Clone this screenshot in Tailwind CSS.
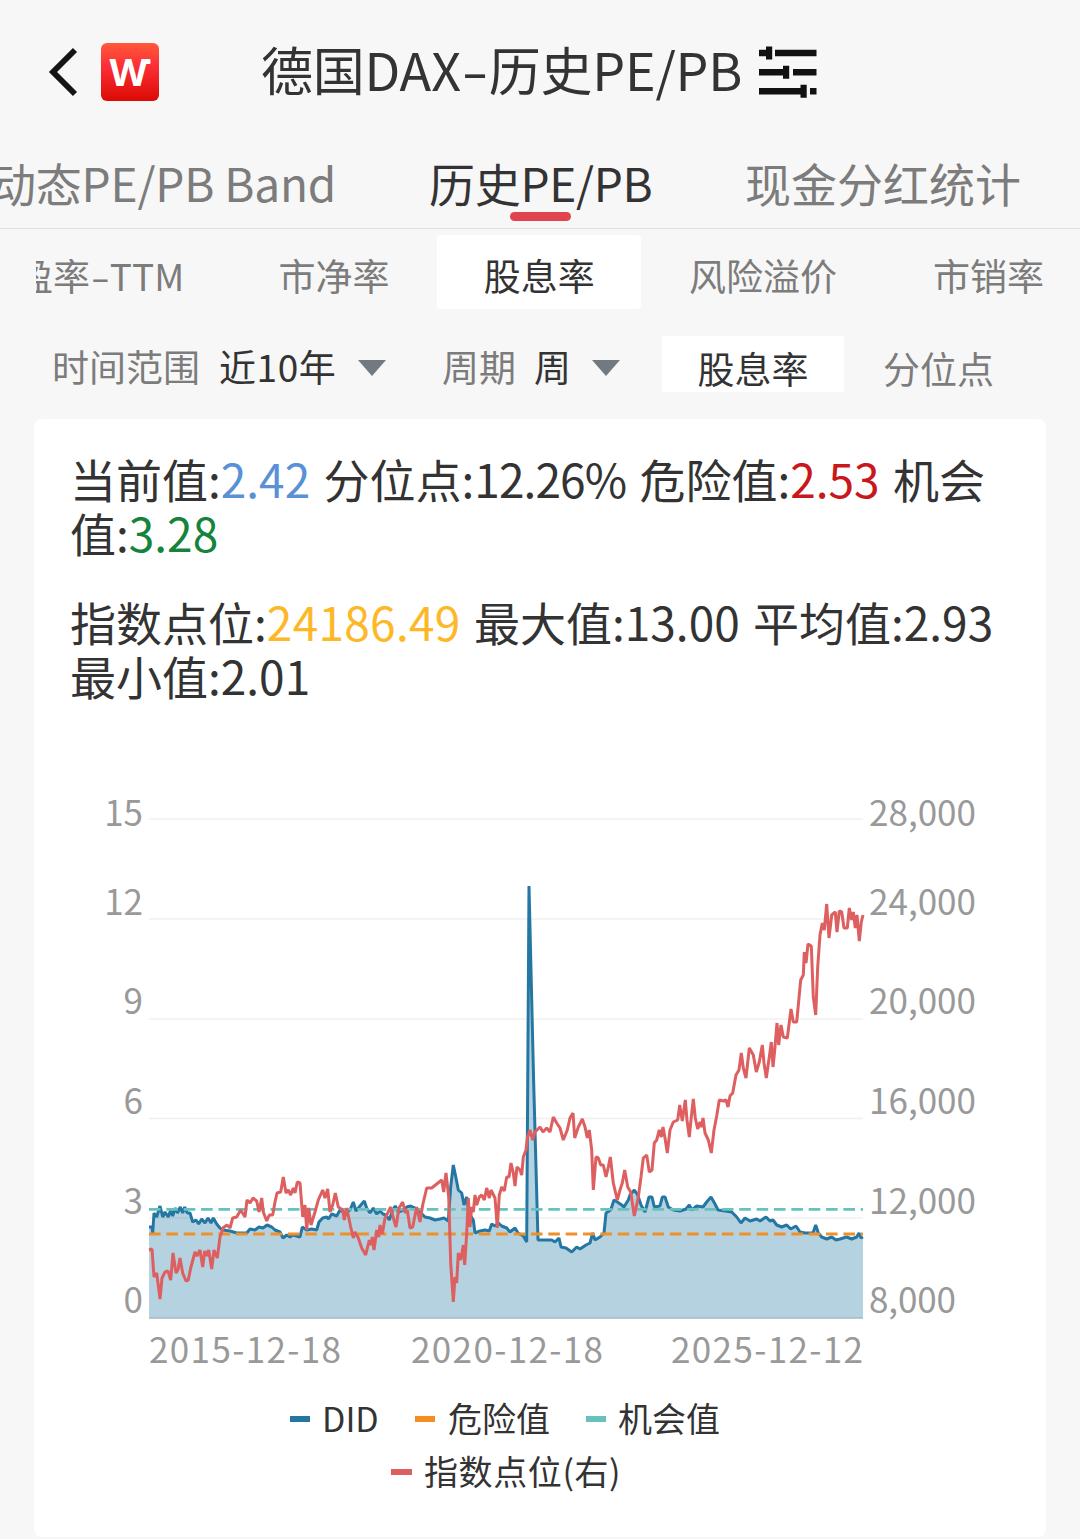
<!DOCTYPE html>
<html lang="zh">
<head>
    <meta charset="UTF-8">
    <meta name="viewport" content="width=device-width, initial-scale=1.0">
    <title>德国DAX-历史PE/PB</title>
    <script src="https://cdn.jsdelivr.net/npm/@tailwindcss/browser@4"></script>
</head>
<body class="bg-[#f7f7f7] text-[#333] font-['Noto_Sans_CJK_SC',sans-serif] w-[1080px] h-[1539px] overflow-hidden whitespace-nowrap">

<!-- 标题栏 -->
<header class="h-[142px] flex items-center pl-[48px] pt-[2px]">
    <svg class="w-[30px] h-[50px] shrink-0" viewBox="48 48 30 50" fill="none" stroke="#151515" stroke-width="5.8">
        <path d="M75 51 L53 73 L75 95"/>
    </svg>
    <svg class="w-[58px] h-[58px] ml-[23px] shrink-0" viewBox="0 0 58 58">
        <defs>
            <linearGradient id="logo" x1="0" y1="0" x2="0" y2="1">
                <stop offset="0" stop-color="#ff5a3a"/>
                <stop offset="0.4" stop-color="#fb2f36"/>
                <stop offset="1" stop-color="#dc0a05"/>
            </linearGradient>
        </defs>
        <rect width="58" height="58" rx="6" fill="url(#logo)"/>
        <text x="8.5" y="42.5" font-family="Noto Sans" font-size="37" font-weight="700" fill="#fff" textLength="38" lengthAdjust="spacingAndGlyphs">W</text>
        <rect x="41" y="16" width="8.5" height="5" rx="1" fill="#fff"/>
    </svg>
    <h1 class="ml-[102px] w-[480px] pb-[6px] text-[52px] leading-[70px] tracking-[-0.2px]">德国DAX<span class="inline-block scale-x-150 mx-[5px]">-</span>历史PE/PB</h1>
    <svg class="w-[58px] h-[52px] ml-[18px] shrink-0" viewBox="759 45 58 52" fill="#111">
        <path d="M759 48.7h7v-3.2h6.2v13h-6.2v-3.2h-7zM775 48.7h41.5v6.6H775z"/>
        <path d="M759 68h24v-3.2h6.2v13H783v-3.2h-24zM793 68h23.5v6.6H793z"/>
        <path d="M759 87h41.5v-3.2h6.2v13h-6.2v-3.2H759zM810 87h6.5v6.6H810z"/>
    </svg>
</header>

<!-- 一级标签 -->
<nav class="h-[87px] border-b border-[#dfdfdf] flex text-[46px] leading-[80px] text-[#7c7c7c]">
    <div class="w-[429px] overflow-hidden"><span class="-ml-[10px] tracking-[-0.2px]">动态PE/PB Band</span></div>
    <div class="relative w-[316px] text-[#333] tracking-[-0.3px]">
        历史PE/PB
        <span class="absolute left-[81px] top-[70px] w-[61px] h-[9px] rounded-full bg-[#e0454e]"></span>
    </div>
    <div>现金分红统计</div>
</nav>

<!-- 二级标签 -->
<nav class="mx-[36px] pt-[6px] flex text-[37px] leading-[80px] h-[80px] text-[#7c7c7c] overflow-hidden">
    <div class="w-[243px]"><span class="-ml-[20px]">盈率<span class="inline-block scale-x-150 mx-[3.5px]">-</span>TTM</span></div>
    <div class="w-[159px]">市净率</div>
    <div class="w-[204px] h-[74px] rounded bg-white text-[#333] text-center">股息率</div>
    <div class="w-[244px] ml-[48px] shrink-0">风险溢价</div>
    <div>市销率</div>
</nav>

<!-- 筛选条件 -->
<div class="h-[110px] pl-[52px] pt-[27px] flex text-[37px] leading-[60px] text-[#7c7c7c]">
    <span class="w-[167px]">时间范围</span>
    <span class="w-[139px] text-[#333] tracking-[0.6px]">近10年</span>
    <svg class="w-[28px] h-[16px] mt-[24px] shrink-0" viewBox="0 0 28 16"><path d="M0 0h28L14 16z" fill="#737980"/></svg>
    <span class="ml-[56px] w-[92px]">周期</span>
    <span class="w-[58px] text-[#333]">周</span>
    <svg class="w-[28px] h-[16px] mt-[24px] shrink-0" viewBox="0 0 28 16"><path d="M0 0h28L14 16z" fill="#737980"/></svg>
    <span class="ml-[42px] w-[182px] h-[56px] leading-[64px] bg-white text-[#333] text-center">股息率</span>
    <span class="ml-[39px] leading-[64px]">分位点</span>
</div>

<main class="mx-[34px] h-[1118px] rounded-lg bg-white pt-[32px]">
    <div class="pl-[36px] text-[46px] leading-[54px]">
        <p class="[word-spacing:3px]">当前值:<span class="text-[#5a90d6]">2.42</span> 分位点:<span class="tracking-[-0.9px]">12.26%</span> 危险值:<span class="text-[#c9171b]">2.53</span> 机会<br>值:<span class="text-[#14833b]">3.28</span></p>
        <p class="mt-[35px] [word-spacing:3px]">指数点位:<span class="text-[#fdb828] tracking-[0.3px]">24186.49</span> 最大值:13.00 平均值:2.93<br>最小值:2.01</p>
    </div>

    <svg class="block w-[1012px] h-[600px] mt-[78px]" viewBox="34 780 1012 600">
        <g id="grid" stroke="#f0f0f0" stroke-width="1.5"></g>
        <path id="area" fill="#1f77a4" fill-opacity="0.33"/>
        <path d="M149 1318H863" stroke="#a9bccb" stroke-width="1.5"/>
        <path id="did" fill="none" stroke="#2577a3" stroke-width="3" stroke-linejoin="bevel"/>
        <path d="M149 1234H863" stroke="#f0902a" stroke-width="3" stroke-dasharray="11.6 5.76"/>
        <path d="M149 1209.3H863" stroke="#67c1bd" stroke-width="2.8" stroke-dasharray="11.6 5.76"/>
        <path id="index" fill="none" stroke="#dd5f60" stroke-width="3" stroke-linejoin="bevel"/>
        <g id="labels" fill="#999" font-size="35"></g>
    </svg>

    <!-- 图例 -->
    <div class="mt-[12px] h-[52px] flex items-center pl-[256px] text-[34px] leading-[52px]">
        <i class="w-[20px] h-[6px] mt-[2px] bg-[#2577a3]"></i><span class="ml-[12px] w-[93px]">DID</span>
        <i class="w-[20px] h-[6px] mt-[2px] bg-[#f68d22]"></i><span class="ml-[13px] w-[138px]">危险值</span>
        <i class="w-[20px] h-[6px] mt-[2px] bg-[#67c1bd]"></i><span class="ml-[12px]">机会值</span>
    </div>
    <div class="h-[54px] flex items-center pl-[357px] text-[34px] leading-[52px]">
        <i class="w-[21px] h-[6px] mt-[2px] bg-[#dd5f60]"></i><span class="ml-[12px] tracking-[0.6px]">指数点位(右)</span>
    </div>
</main>

<script>
    // 股息率
    const did = `149,1227 152,1227 152.7,1233 154,1213 156.7,1217 160,1206 162.7,1217 165,1212 168.3,1217 170.7,1210 172.7,1216
        175.3,1208 177.5,1213 180.3,1207 182.7,1213 184.7,1207 187.3,1213 190,1213 192.7,1222 196,1220 198.7,1224 201.7,1219 205,1223
        208,1218 211,1223 213.3,1218 216.7,1224 220,1228 223,1230 230,1231 236.7,1233 246.7,1233 250,1229 255,1230 259,1227 263,1228
        267,1225 271.7,1227 275,1230 280,1232 283,1238 286.7,1235 290,1237 293,1235 300,1237 302.3,1227 306.7,1230 311.7,1229
        316.7,1230 319,1222 322.7,1218 326.7,1217 328.5,1219 331.7,1214 336.7,1216 340,1210 345,1213 350,1210 353.3,1202 356,1211
        360,1206 364.3,1201 366.7,1208 370,1213 373.3,1208 376.7,1214 380,1211 383,1214 386,1215 389.3,1220 392.7,1210 395.3,1206
        398.3,1212 403.3,1210 406.7,1207 410.7,1206 415,1208 420,1212 425,1217 430,1218 435,1220 440,1219 444,1218 448.3,1221
        450.7,1187 453.3,1165 456,1178 458.3,1190 461.7,1193 464,1205 466.7,1197 469,1213 473.3,1220 475,1233 480,1231 485,1230
        489.3,1231 491.7,1224 495,1226 498.3,1223 501.7,1226 506.7,1228 510,1232 515,1228 518,1233 523.3,1236 526.7,1242 529,886
        533.6,1080 538,1240 551.7,1240 555,1242 559,1238 561,1247 566,1248 571.7,1252 576.7,1247 580,1249 583,1247 586,1245 590,1243
        592.7,1233 595,1240 600,1237 604,1233 606,1213 610.7,1210 614,1200 617.3,1202 621.7,1205 624,1207 628.3,1200 630,1195
        634.3,1190 637.7,1195 641,1205 645,1212 649,1197 652,1197 654.3,1207 660,1206 662.3,1197 665,1197 668.3,1207 673.3,1210
        680,1211 686,1209 689.3,1205 691.7,1210 696.7,1206 703,1207 706.7,1202 711,1197 715,1204 718,1210 725,1211 731.7,1212
        736.7,1217 741,1223 745,1218 750,1221 756.7,1219 760,1221 766,1217 770,1221 773,1220 776.7,1225 781.7,1227 786.7,1225
        790.7,1229 796,1226 800,1232 805,1233 813,1233 815.7,1225 818.3,1233 821.7,1237 826.7,1239 831.7,1237 836,1240 840,1239
        846.7,1237 851.7,1239 856.7,1237 859,1233 861,1238 863,1237`;

    // 指数点位
    const index = `149,1250 152,1249 154,1277 156.7,1273 160,1299 162,1278 165,1272 168,1271 170.7,1280 173,1253 176,1273 178,1270
        180,1258 182.7,1273 186,1281 188.3,1280 190.7,1268 195,1252 197,1256 200,1250 202.7,1267 204.7,1251 206.7,1256 208.7,1250
        211.7,1269 214,1250 217.3,1258 220,1237 223,1228 227,1225 230,1228 232.7,1218 236.7,1217 240.7,1210 245,1217 247,1200
        250,1203 253,1198 256.7,1201 259,1212 261.7,1198 263.3,1212 266.7,1221 269.3,1215 272.7,1215 275,1202 277,1193 280.7,1192
        283.3,1177 286,1193 288.3,1190 290.7,1195 293.3,1188 295,1193 297.3,1182 300,1183 302.7,1217 305,1205 306.7,1230 308.7,1208
        311,1225 315,1212 318.3,1200 322.7,1190 325,1198 327.7,1189 330,1212 332.7,1205 335.3,1193 338.3,1207 342.7,1210 344.3,1220
        346.7,1208 350.7,1227 353.3,1238 355,1232 358.3,1238 361.7,1248 365.7,1255 369.3,1240 370.7,1245 372.3,1237 374,1250
        376.7,1230 378.7,1237 380,1225 382.3,1234 385,1218 387.7,1213 390.7,1207 393.3,1218 396,1227 399,1208 402.7,1202 405.3,1213
        407.3,1210 410,1228 412.7,1227 416.7,1207 420,1222 422.7,1205 426.7,1188 431.7,1188 436.7,1184 441.7,1180 443.7,1192
        446,1173 448.7,1197 450.7,1263 453.3,1302 455,1277 456.7,1283 458.3,1253 460.7,1260 463.3,1245 464.7,1265 466.7,1233
        468.3,1198 470,1227 471.7,1207 473.3,1212 475,1195 476.7,1205 479.3,1197 481.7,1195 484.3,1200 486.7,1188 489.3,1198
        491,1190 495,1198 497.3,1228 499.3,1195 501.7,1187 504.3,1191 506.7,1177 509,1177 511,1163 513.3,1173 515,1186 517,1167
        520,1170 521.7,1175 523.3,1157 526,1150 527.3,1138 530,1130 532.7,1140 535,1132 540,1127 543,1132 546.7,1128 550,1132
        553.3,1117 556.7,1123 560,1128 563.3,1140 567.3,1130 570,1118 573,1113 574.7,1138 578.3,1127 582.3,1119 585,1127 587.3,1138
        589.3,1130 591.7,1150 593.3,1190 596,1157 598.3,1158 600.7,1165 603.3,1165 606,1177 608.3,1167 610.3,1157 613.3,1183
        617.3,1200 620,1190 622.3,1183 624.7,1170 627.7,1187 630.7,1192 634.3,1216 638.3,1197 641,1177 643.3,1158 646.7,1155
        649.3,1172 652,1170 654.3,1143 656.7,1140 659.3,1130 661.3,1137 663,1127 665,1138 667.3,1153 670,1130 673.3,1122 677.7,1120
        679.7,1105 682.3,1121 685.3,1100 687,1120 689.3,1137 691.3,1117 693.3,1099 695.3,1118 697.7,1129 700,1122 701.3,1127
        703,1118 705,1133 708.3,1140 711.3,1153 714,1130 716.7,1116 719.3,1100 723.3,1101 726,1100 728,1107 730,1096 732.7,1093
        736,1075 739,1070 741.3,1053 743.3,1068 746,1078 749.3,1048 753.3,1055 756.3,1072 759.3,1062 762.3,1045 764,1063 766.3,1078
        769.3,1057 771.3,1042 773,1067 774.7,1050 777,1023 778.7,1045 781,1025 783.3,1037 787.3,1038 791,1009 793.3,1022 796.7,1022
        800.7,980 803.3,975 804.3,952 806,963 808,944 811.3,946 813.3,997 815.7,1015 817.7,967 820,935 822.3,923 824.3,930
        826.7,904 829,938 831.7,915 835.3,912 837,932 839.3,911 841.7,912 844,928 847.3,928 849.3,908 851.7,920 853.3,912
        855.3,928 857,915 859.3,941 861.3,922 863,915`;

    document.getElementById('did').setAttribute('d', 'M' + did);
    document.getElementById('area').setAttribute('d', 'M149,1318 ' + did + ' 863,1318Z');
    document.getElementById('index').setAttribute('d', 'M' + index);

    const rows = [
        [819, 826, '15', '28,000'],
        [919, 915, '12', '24,000'],
        [1019, 1014, '9', '20,000'],
        [1118.5, 1114, '6', '16,000'],
        [1218, 1214, '3', '12,000'],
        [1318, 1313, '0', '8,000'],
    ];
    let grid = '';
    let labels = '';
    for (const [lineY, textY, left, right] of rows) {
        grid += `<path d="M149 ${lineY}H863"/>`;
        labels += `<text x="143" y="${textY}" text-anchor="end">${left}</text>`;
        labels += `<text x="869" y="${textY}" textLength="${right.length === 6 ? 107 : 87}">${right}</text>`;
    }
    ['2015-12-18', '2020-12-18', '2025-12-12'].forEach((date, i) => {
        labels += `<text x="${[149, 411, 671][i]}" y="1363" textLength="192">${date}</text>`;
    });
    document.getElementById('grid').innerHTML = grid;
    document.getElementById('labels').innerHTML = labels;
</script>
</body>
</html>
